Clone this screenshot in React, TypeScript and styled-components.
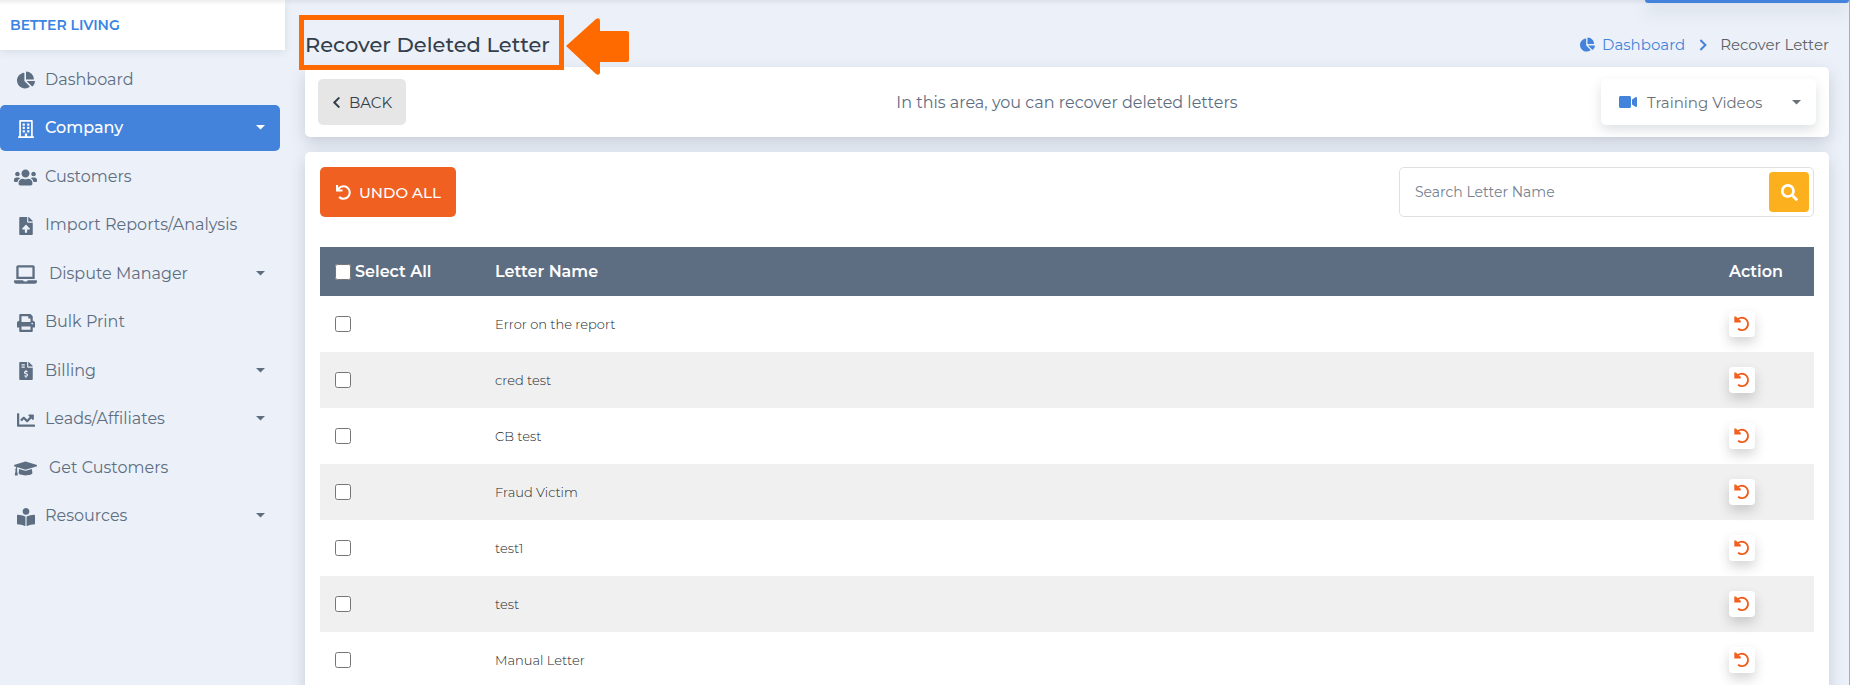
import React from 'react';
import styled, { createGlobalStyle } from 'styled-components';
import {
  FaBookReader,
  FaChartLine,
  FaChartPie,
  FaChevronLeft,
  FaFileInvoiceDollar,
  FaFileUpload,
  FaGraduationCap,
  FaLaptop,
  FaPrint,
  FaRegBuilding,
  FaSearch,
  FaUndo,
  FaUsers,
  FaVideo,
} from 'react-icons/fa';
import type { IconType } from 'react-icons';

const color = {
  page: '#ecf1f9',
  blue: '#4483db',
  slate: '#5e6e82',
  orange: '#f06021',
  marker: '#ff6a00',
  amber: '#fdb01e',
};

const GlobalStyle = createGlobalStyle`
  *, *::before, *::after { box-sizing: border-box; }
  body {
    margin: 0;
    background: ${color.page};
    color: ${color.slate};
    font-family: Montserrat, Inter, 'Liberation Sans', sans-serif;
    font-size: 16px;
  }
  button, input { font: inherit; }
  a { text-decoration: none; }
`;

const Page = styled.div`
  position: relative;
  display: flex;
  height: 100vh;
  overflow: hidden;
  border-right: 1px solid #a9adb5;
`;

const TopShade = styled.div`
  position: absolute;
  inset: 0 0 auto 0;
  height: 5px;
  background: linear-gradient(rgba(60, 70, 90, 0.09), rgba(60, 70, 90, 0));
  pointer-events: none;
`;

const TopTab = styled.div`
  position: absolute;
  top: 0;
  right: 0;
  width: 204px;
  height: 3px;
  border-radius: 0 0 5px 5px;
  background: ${color.blue};
  box-shadow: 0 6px 16px rgba(50, 60, 80, 0.35);
`;

const Sidebar = styled.aside`
  flex: 0 0 285px;
`;

const Brand = styled.div`
  display: flex;
  align-items: center;
  height: 50px;
  padding: 0 10px;
  background: #fff;
  box-shadow: 0 2px 8px rgba(60, 70, 90, 0.12);
  color: #3a83e2;
  font-size: 14px;
  font-weight: 600;
`;

const Nav = styled.nav`
  display: flex;
  flex-direction: column;
  justify-content: space-between;
  height: 483px;
  margin: 6px 5px 0 0;
`;

const NavLink = styled.a<{ $active?: boolean }>`
  display: flex;
  align-items: center;
  height: 46px;
  padding: 0 15px 0 14px;
  border-radius: 5px;
  background: ${(p) => (p.$active ? color.blue : 'transparent')};
  color: ${(p) => (p.$active ? '#fff' : color.slate)};
  font-weight: ${(p) => (p.$active ? 500 : 400)};

  > span { flex: 1; }
`;

const NavIcon = styled.i<{ $large?: boolean; $spaced?: boolean }>`
  display: flex;
  justify-content: center;
  width: 23px;
  margin-right: ${(p) => (p.$spaced ? 12 : 8)}px;
  padding-top: 2px;
  font-size: ${(p) => (p.$large ? 23 : 18)}px;
`;

const Main = styled.main`
  flex: 1;
  min-width: 0;
  padding: 0 20px;
`;

const PageHead = styled.header`
  display: flex;
  align-items: center;
  justify-content: space-between;
  height: 67px;
  padding-top: 22px;
`;

const TitleWrap = styled.div`
  position: relative;
`;

const Title = styled.h1`
  margin: 0;
  color: #343f4b;
  font-size: 21px;
  font-weight: 500;
  line-height: 28px;
`;

const TitleFrame = styled.div`
  position: absolute;
  z-index: 1;
  top: -16px;
  left: -6px;
  width: 265px;
  height: 55px;
  border: 5px solid ${color.marker};
`;

const Arrow = styled.svg`
  position: absolute;
  z-index: 1;
  top: -13px;
  left: 261px;
  fill: ${color.marker};
`;

const Crumbs = styled.nav`
  display: flex;
  align-items: center;
  color: #5d6166;
  font-size: 15px;

  a {
    display: flex;
    align-items: center;
    gap: 7px;
    color: ${color.blue};
  }
  > svg { margin: 0 13px 0 14px; }
`;

const Card = styled.section`
  border-radius: 5px;
  background: #fff;
  box-shadow: 0 6px 16px rgba(50, 60, 80, 0.2);
`;

const InfoCard = styled(Card)`
  display: grid;
  grid-template-columns: 1fr auto 1fr;
  align-items: center;
  height: 70px;
  margin-bottom: 15px;
  padding: 0 13px;
`;

const BackButton = styled.button`
  display: flex;
  align-items: center;
  justify-self: start;
  gap: 6px;
  height: 46px;
  padding: 0 14px 0 12px;
  border: 0;
  border-radius: 5px;
  background: #e6e6e6;
  color: #343f4b;
  font-size: 15px;
  svg { font-size: 13px; }
`;

const Hint = styled.p`
  margin: 0;
`;

const VideosButton = styled.button`
  display: flex;
  align-items: center;
  justify-self: end;
  width: 215px;
  height: 46px;
  padding: 0 15px 0 18px;
  border: 0;
  border-radius: 5px;
  background: #fff;
  box-shadow: 0 5px 12px rgba(50, 60, 80, 0.16);
  color: #6b7178;
  font-size: 15px;

  > span { flex: 1; margin-left: 10px; text-align: left; }
  > svg:first-child { color: ${color.blue}; font-size: 18px; }
`;

const ListCard = styled(Card)`
  padding: 15px;
`;

const Tools = styled.div`
  display: flex;
  justify-content: space-between;
  margin-bottom: 30px;
`;

const UndoAll = styled.button`
  display: flex;
  align-items: center;
  gap: 8px;
  height: 50px;
  padding: 0 15px 0 16px;
  border: 0;
  border-radius: 5px;
  background: ${color.orange};
  color: #fff;
  font-size: 15px;
  font-weight: 500;
`;

const Search = styled.form`
  display: flex;
  align-items: center;
  width: 415px;
  height: 50px;
  padding-right: 4px;
  border: 1px solid #dee0e4;
  border-radius: 5px;

  input {
    flex: 1;
    min-width: 0;
    height: 100%;
    padding: 0 15px;
    border: 0;
    background: transparent;
    font-size: 14px;
    outline: 0;
  }
  input::placeholder { color: #75818f; opacity: 1; }
  button {
    display: flex;
    align-items: center;
    justify-content: center;
    width: 40px;
    height: 40px;
    padding: 0;
    border: 0;
    border-radius: 4px;
    background: ${color.amber};
    color: #fff;
  }
`;

const Table = styled.table`
  width: 100%;
  border-collapse: collapse;
  table-layout: fixed;

  th, td { padding: 0 15px; text-align: left; }
  th:first-child { width: 160px; }
  th:last-child { width: 100px; }
  th {
    height: 49px;
    background: ${color.slate};
    color: #fff;
    font-weight: 600;
  }
  td {
    height: 56px;
    color: #212529;
    font-size: 13px;
    font-weight: 300;
  }
  tbody tr:nth-child(even) { background: #f0f0f0; }
`;

const Check = styled.input`
  display: block;
  flex: none;
  width: 16px;
  height: 16px;
  margin: 0;
`;

const SelectAll = styled.label`
  display: flex;
  align-items: center;
  gap: 4px;
`;

const UndoButton = styled.button`
  display: flex;
  align-items: center;
  justify-content: center;
  width: 26px;
  height: 26px;
  padding: 0;
  border: 0;
  border-radius: 4px;
  background: #fff;
  box-shadow: 0 6px 12px rgba(50, 50, 50, 0.2);
`;

type Item = {
  label: string;
  icon: IconType;
  menu?: boolean;
  large?: boolean;
  spaced?: boolean;
  active?: boolean;
};

const items: Item[] = [
  { label: 'Dashboard', icon: FaChartPie },
  { label: 'Company', icon: FaRegBuilding, menu: true, active: true },
  { label: 'Customers', icon: FaUsers, large: true },
  { label: 'Import Reports/Analysis', icon: FaFileUpload },
  { label: 'Dispute Manager', icon: FaLaptop, menu: true, large: true, spaced: true },
  { label: 'Bulk Print', icon: FaPrint },
  { label: 'Billing', icon: FaFileInvoiceDollar, menu: true },
  { label: 'Leads/Affiliates', icon: FaChartLine, menu: true },
  { label: 'Get Customers', icon: FaGraduationCap, large: true, spaced: true },
  { label: 'Resources', icon: FaBookReader, menu: true },
];

const letters = ['Error on the report', 'cred test', 'CB test', 'Fraud Victim', 'test1', 'test', 'Manual Letter'];

const Caret = () => (
  <svg width="9" height="5" viewBox="0 0 9 5" fill="currentColor" aria-hidden="true">
    <path d="M0 0H9L4.5 4.6Z" />
  </svg>
);

const Angle = () => (
  <svg width="8" height="12" viewBox="0 0 8 12" fill="none" stroke={color.blue} strokeWidth="2" aria-hidden="true">
    <path d="M1.4 1L6.4 6L1.4 11" />
  </svg>
);

const UndoIcon = () => (
  <svg width="16" height="16" viewBox="0 0 16 16" fill="none" stroke={color.orange} strokeWidth="1.9" aria-hidden="true">
    <path d="M2.6 4.6A6.2 6.2 0 1 1 4 12.8" />
    <path d="M0.3 0.6H1.9L6.8 5V6.4H0.3Z" fill={color.orange} stroke="none" />
  </svg>
);

export default function App() {
  return (
    <Page>
      <GlobalStyle />
      <Sidebar>
        <Brand>BETTER LIVING</Brand>
        <Nav aria-label="Main">
          {items.map(({ label, icon: Icon, menu, large, spaced, active }) => (
            <NavLink key={label} href="#" $active={active}>
              <NavIcon $large={large} $spaced={spaced}><Icon /></NavIcon>
              <span>{label}</span>
              {menu && <Caret />}
            </NavLink>
          ))}
        </Nav>
      </Sidebar>
      <Main>
        <PageHead>
          <TitleWrap>
            <Title>Recover Deleted Letter</Title>
            <TitleFrame />
            <Arrow width="63" height="57" viewBox="0 0 63 57" aria-hidden="true">
              <path d="M0 28L30 1Q34 -1 34 3V13H61Q63 13 63 15V42Q63 44 61 44H34V55Q33 58 30 56Z" />
            </Arrow>
          </TitleWrap>
          <Crumbs aria-label="Breadcrumb">
            <a href="#"><FaChartPie />Dashboard</a>
            <Angle />
            <span>Recover Letter</span>
          </Crumbs>
        </PageHead>
        <InfoCard>
          <BackButton type="button"><FaChevronLeft />BACK</BackButton>
          <Hint>In this area, you can recover deleted letters</Hint>
          <VideosButton type="button">
            <FaVideo />
            <span>Training Videos</span>
            <Caret />
          </VideosButton>
        </InfoCard>
        <ListCard>
          <Tools>
            <UndoAll type="button"><FaUndo />UNDO ALL</UndoAll>
            <Search onSubmit={(e) => e.preventDefault()}>
              <input type="text" placeholder="Search Letter Name" aria-label="Search Letter Name" />
              <button type="submit" aria-label="Search"><FaSearch size={17} /></button>
            </Search>
          </Tools>
          <Table>
            <thead>
              <tr>
                <th><SelectAll><Check type="checkbox" />Select All</SelectAll></th>
                <th>Letter Name</th>
                <th>Action</th>
              </tr>
            </thead>
            <tbody>
              {letters.map((name) => (
                <tr key={name}>
                  <td><Check type="checkbox" aria-label={`Select ${name}`} /></td>
                  <td>{name}</td>
                  <td><UndoButton type="button" aria-label={`Recover ${name}`}><UndoIcon /></UndoButton></td>
                </tr>
              ))}
            </tbody>
          </Table>
        </ListCard>
      </Main>
      <TopShade />
      <TopTab />
    </Page>
  );
}
